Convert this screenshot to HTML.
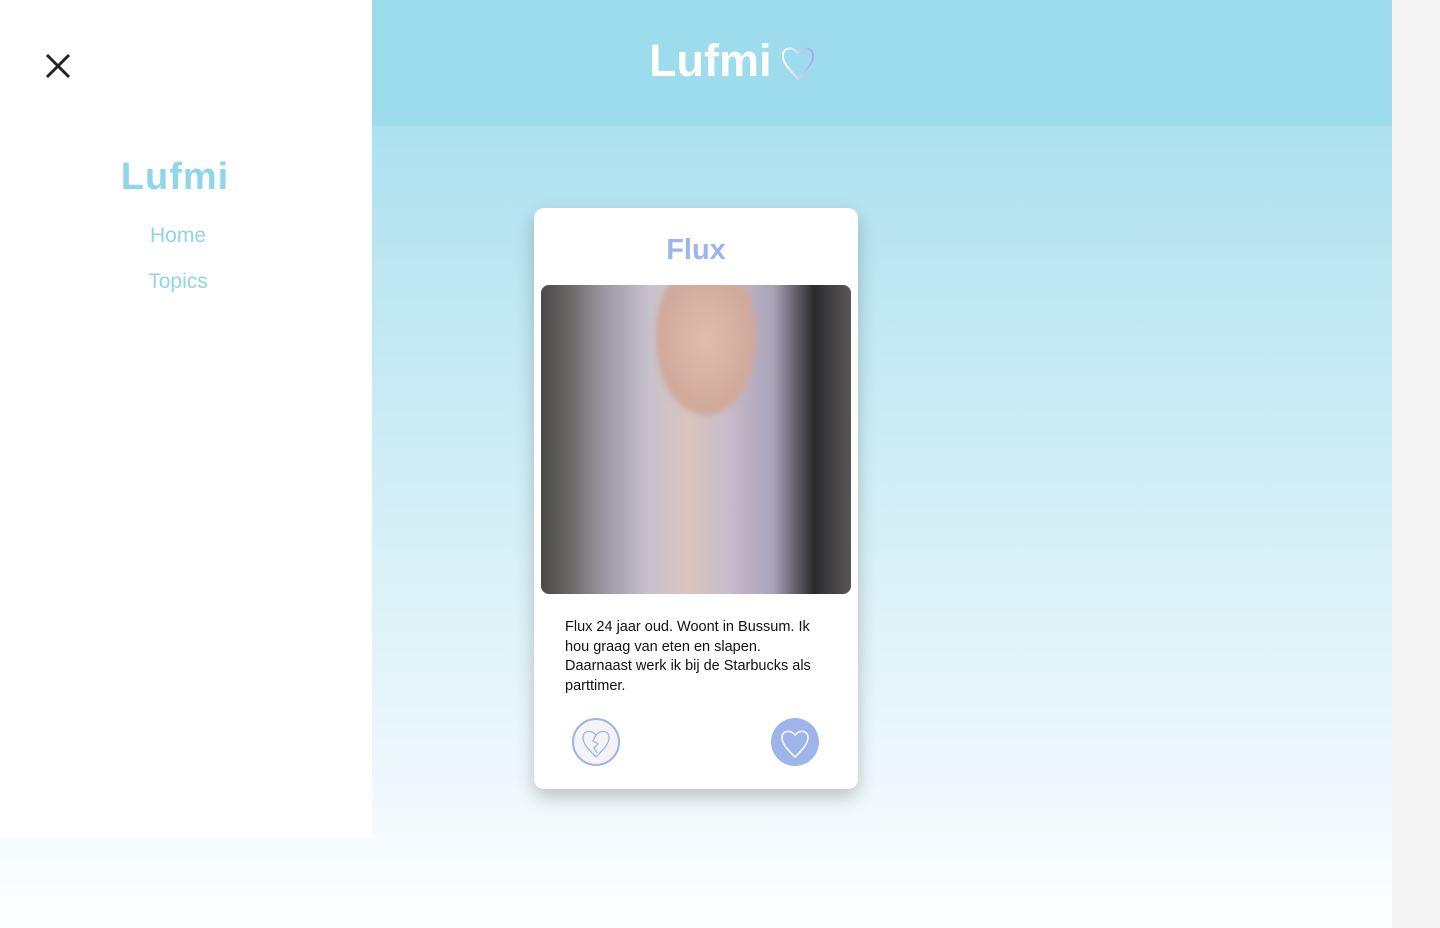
<!DOCTYPE html>
<html><head><meta charset="utf-8"><style>
*{margin:0;padding:0;box-sizing:border-box}
body{width:1440px;height:928px;overflow:hidden;font-family:"Liberation Sans",sans-serif;background:#f4f4f4;position:relative}
.main{position:absolute;left:0;top:0;width:1392px;height:928px;background:linear-gradient(#ade1ef 125px,#c9ebf4 400px,#e6f5fa 700px,#fbfdfe 900px)}
.hdr{position:absolute;left:372px;top:0;width:1020px;height:126px;background:#9ddcec}
.logo{position:absolute;left:649px;top:35px;font-size:45px;font-weight:bold;color:#fff;letter-spacing:0}
.side{position:absolute;left:0;top:0;width:372px;height:838px;background:#fff}
.side .brand{position:absolute;left:0;width:350px;top:156px;text-align:center;font-size:38px;font-weight:bold;color:#8fd6e8;letter-spacing:1px}
.side a{position:absolute;width:356px;text-align:center;font-size:21px;color:#8fd6e8;text-decoration:none}
.card{position:absolute;left:534px;top:208px;width:324px;height:581px;background:#fff;border-radius:10px;box-shadow:0 8px 18px rgba(0,0,0,.22)}
.card h2{position:absolute;top:26px;width:100%;text-align:center;font-size:29px;color:#9db5ea}
.photo{position:absolute;left:7px;top:77px;width:310px;height:309px;border-radius:8px;overflow:hidden;background:linear-gradient(90deg,#4a4848 0%,#6e6a6a 10%,#9a97a0 20%,#c8c2cc 35%,#d9c5bd 48%,#c9bccb 60%,#a9a3b8 75%,#2a2a2e 88%,#5a5656 100%)}
.face{position:absolute;left:115px;top:-20px;width:100px;height:150px;border-radius:45% 45% 50% 50%;background:radial-gradient(#e0bcae,#c89f90);filter:blur(3px)}
.desc{position:absolute;left:31px;top:618px;width:252px;font-size:14.5px;line-height:19.5px;color:#111}
</style></head><body>
<div class="main"></div>
<div class="hdr"></div>
<div class="logo">Lufmi</div>
<svg style="position:absolute;left:780px;top:44px" width="36" height="38" viewBox="0 0 36 38"><defs><linearGradient id="g" x1="0" x2="1"><stop offset="0" stop-color="#fff"/><stop offset="1" stop-color="#a9a9ee"/></linearGradient></defs><path d="M18 35 C8 24 2 18 3 10 C4 4 12 2 18 9 C24 2 32 4 33 10 C34 18 28 24 18 35Z" fill="none" stroke="url(#g)" stroke-width="2"/></svg>
<div class="side">
<svg style="position:absolute;left:45px;top:53px" width="26" height="26"><path d="M2 2L24 24M24 2L2 24" stroke="#222" stroke-width="3"/></svg>
<div class="brand">Lufmi</div>
<a style="top:224px">Home</a>
<a style="top:270px">Topics</a>
</div>
<div class="card">
<h2>Flux</h2>
<div class="photo"><div class="face"></div></div>
<div class="desc" style="top:410px">Flux 24 jaar oud. Woont in Bussum. Ik hou graag van eten en slapen. Daarnaast werk ik bij de Starbucks als parttimer.</div>
<svg style="position:absolute;left:37px;top:509px" width="50" height="50"><circle cx="25" cy="25" r="23" fill="#f4f4f4" stroke="#9db5ea" stroke-width="2"/><path d="M25 40C17 32 12 27 12 20C12 14 20 12 25 18C30 12 38 14 38 20C38 27 33 32 25 40ZM25 18L22 24L27 27L23 31L26 36" fill="none" stroke="#9db5ea" stroke-width="1.3"/></svg>
<svg style="position:absolute;left:236px;top:509px" width="50" height="50"><circle cx="25" cy="25" r="24" fill="#9db5ea"/><path d="M25 40C17 32 12 27 12 20C12 14 20 12 25 18C30 12 38 14 38 20C38 27 33 32 25 40Z" fill="none" stroke="#fff" stroke-width="1.5"/></svg>
</div>
</body></html>
